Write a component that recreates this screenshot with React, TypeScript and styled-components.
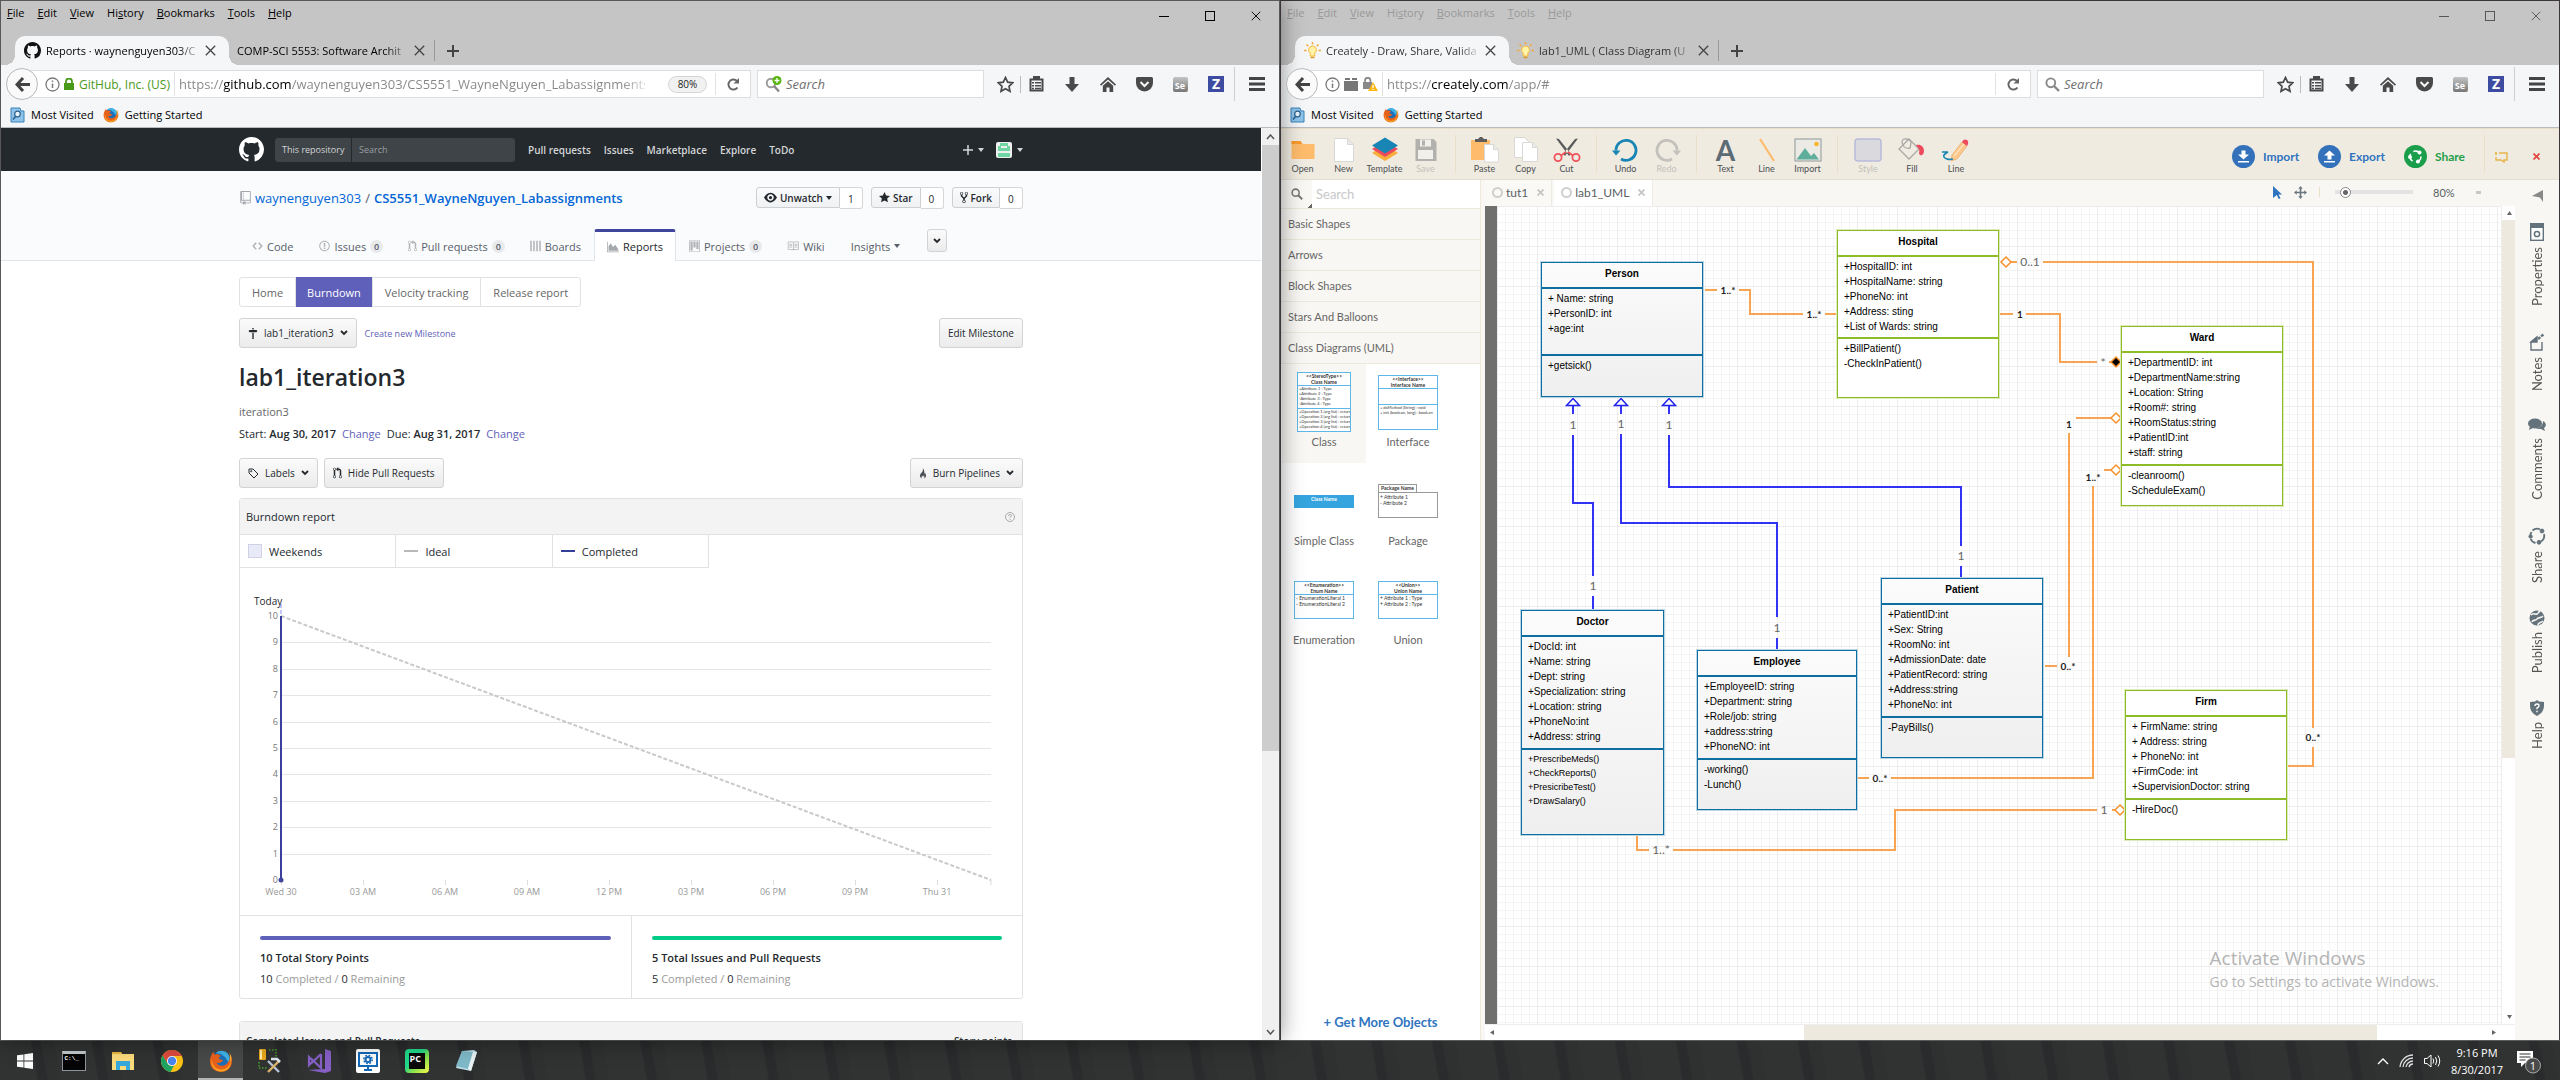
import React from "react";
import styled, { createGlobalStyle, css } from "styled-components";

const UI = `"Open Sans", "Noto Sans", sans-serif`;
const LATO = `Lato, "Open Sans", sans-serif`;
const ARIAL = `"Liberation Sans", Arial, sans-serif`;

const Global = createGlobalStyle`
  *, *::before, *::after { box-sizing: border-box; }
  body { margin: 0; background: #2b2c2c; font-family: ${UI}; font-size: 11px; color: #111; overflow: hidden; }
  button, input, select { font: inherit; color: inherit; margin: 0; padding: 0; border: 0; background: none; outline: 0; }
  h1, h2, h3, p, ul { margin: 0; padding: 0; font-weight: inherit; font-size: inherit; }
  ul { list-style: none; }
  a { color: inherit; text-decoration: none; }
  svg { display: block; flex: none; }
`;

/* ---------- icons ---------- */

const OCT = {
  github: [16, "M8 0C3.58 0 0 3.58 0 8c0 3.54 2.29 6.53 5.47 7.59.4.07.55-.17.55-.38 0-.19-.01-.82-.01-1.49-2.01.37-2.53-.49-2.69-.94-.09-.23-.48-.94-.82-1.13-.28-.15-.68-.52-.01-.53.63-.01 1.08.58 1.23.82.72 1.21 1.87.87 2.33.66.07-.52.28-.87.51-1.07-1.78-.2-3.64-.89-3.64-3.95 0-.87.31-1.59.82-2.15-.08-.2-.36-1.02.08-2.12 0 0 .67-.21 2.2.82.64-.18 1.32-.27 2-.27.68 0 1.36.09 2 .27 1.53-1.04 2.2-.82 2.2-.82.44 1.1.16 1.92.08 2.12.51.56.82 1.27.82 2.15 0 3.07-1.87 3.75-3.65 3.95.29.25.54.73.54 1.48 0 1.07-.01 1.93-.01 2.2 0 .21.15.46.55.38A8.013 8.013 0 0 0 16 8c0-4.42-3.58-8-8-8z"],
  repo: [12, "M4 9H3V8h1v1zm0-3H3v1h1V6zm0-2H3v1h1V4zm0-2H3v1h1V2zm8-1v12c0 .55-.45 1-1 1H6v2l-1.5-1.5L3 16v-2H1c-.55 0-1-.45-1-1V1c0-.55.45-1 1-1h10c.55 0 1 .45 1 1zm-1 10H1v2h2v-1h3v1h5v-2zm0-10H2v9h9V1z"],
  code: [14, "M9.5 3L8 4.5 11.5 8 8 11.5 9.5 13 14 8 9.5 3zm-5 0L0 8l4.5 5L6 11.5 2.5 8 6 4.5 4.5 3z"],
  issue: [14, "M7 2.3c3.14 0 5.7 2.56 5.7 5.7s-2.56 5.7-5.7 5.7A5.71 5.71 0 0 1 1.3 8c0-3.14 2.56-5.7 5.7-5.7zM7 1C3.14 1 0 4.14 0 8s3.14 7 7 7 7-3.14 7-7-3.14-7-7-7zm1 3H6v5h2V4zm0 6H6v2h2v-2z"],
  pull: [12, "M11 11.28V5c-.03-.78-.34-1.47-.94-2.06C9.46 2.35 8.78 2.03 8 2H7V0L4 3l3 3V4h1c.27.02.48.11.69.31.21.2.3.42.31.69v6.28A1.993 1.993 0 0 0 10 15a1.993 1.993 0 0 0 1-3.72zm-1 2.92c-.66 0-1.2-.55-1.2-1.2 0-.65.55-1.2 1.2-1.2.65 0 1.2.55 1.2 1.2 0 .65-.55 1.2-1.2 1.2zM4 3c0-1.11-.89-2-2-2a1.993 1.993 0 0 0-1 3.72v6.56A1.993 1.993 0 0 0 2 15a1.993 1.993 0 0 0 1-3.72V4.72c.59-.34 1-.98 1-1.72zm-.8 10c0 .66-.55 1.2-1.2 1.2-.65 0-1.2-.55-1.2-1.2 0-.65.55-1.2 1.2-1.2.65 0 1.2.55 1.2 1.2zM2 4.2C1.34 4.2.8 3.65.8 3c0-.65.55-1.2 1.2-1.2.65 0 1.2.55 1.2 1.2 0 .65-.55 1.2-1.2 1.2z"],
  boards: [14, "M0 1h2v14H0zM4 1h2v14H4zM8 1h2v14H8zM12 1h2v14h-2z"],
  reports: [16, "M0 1h1v13h15v1H0zM2 13V7l3-4 3 5 3-3 4 6v2z"],
  project: [15, "M10 12h3V2h-3v10zm-4-2h3V2H6v8zm-4 4h3V2H2v12zm-1 1h13V1H1v14zM14 0H1a1 1 0 0 0-1 1v14a1 1 0 0 0 1 1h13a1 1 0 0 0 1-1V1a1 1 0 0 0-1-1z"],
  book: [16, "M3 5h4v1H3V5zm0 3h4V7H3v1zm0 2h4V9H3v1zm11-5h-4v1h4V5zm0 2h-4v1h4V7zm0 2h-4v1h4V9zm2-6v9c0 .55-.45 1-1 1H9.5l-1 1-1-1H2c-.55 0-1-.45-1-1V3c0-.55.45-1 1-1h5.5l1 1 1-1H15c.55 0 1 .45 1 1zm-8 .5L7.5 3H2v9h6V3.5zm7-.5H9.5l-.5.5V12h6V3z"],
  eye: [16, "M8.06 2C3 2 0 8 0 8s3 6 8.06 6C13 14 16 8 16 8s-3-6-7.94-6zM8 12c-2.2 0-4-1.78-4-4 0-2.2 1.8-4 4-4 2.22 0 4 1.8 4 4 0 2.22-1.78 4-4 4zm2-4c0 1.11-.89 2-2 2-1.11 0-2-.89-2-2 0-1.11.89-2 2-2 1.11 0 2 .89 2 2z"],
  star: [14, "M14 6l-4.9-.64L7 1 4.9 5.36 0 6l3.6 3.26L2.67 14 7 11.67 11.33 14l-.93-4.74z"],
  fork: [10, "M8 1a1.993 1.993 0 0 0-1 3.72V6L5 8 3 6V4.72A1.993 1.993 0 0 0 2 1a1.993 1.993 0 0 0-1 3.72V6.5l3 3v1.78A1.993 1.993 0 0 0 5 15a1.993 1.993 0 0 0 1-3.72V9.5l3-3V4.72A1.993 1.993 0 0 0 8 1zM2 4.2C1.34 4.2.8 3.65.8 3c0-.65.55-1.2 1.2-1.2.65 0 1.2.55 1.2 1.2 0 .65-.55 1.2-1.2 1.2zm3 10c-.66 0-1.2-.55-1.2-1.2 0-.65.55-1.2 1.2-1.2.65 0 1.2.55 1.2 1.2 0 .65-.55 1.2-1.2 1.2zm3-10c-.66 0-1.2-.55-1.2-1.2 0-.65.55-1.2 1.2-1.2.65 0 1.2.55 1.2 1.2 0 .65-.55 1.2-1.2 1.2z"],
  milestone: [14, "M8 2H6V0h2v2zm4 4H2L.5 4.500 2 3h10l1.500 1.500zM8 7v9H6V7z"],
  flame: [12, "M5.500 0c1 2.500.2 4.200-.8 5.600C3.500 7.200 1.500 8.500 1.500 11.300c0 1.800.9 3.300 2.400 4.200-.6-2 .3-3.300 1.200-4.300.2 1 .6 1.400 1.200 1.700.3-.7.3-1.600.2-2.400 1.200.9 2.200 2.900 1.500 4.900 1.600-.8 2.500-2.300 2.500-4.100 0-2-.9-3.500-1.800-4.300.1 1-.2 1.600-.7 2C8.400 5.500 7.800 1.800 5.500 0z"],
} as const;

type OctName = keyof typeof OCT;

function Oct({ name, size, color = "currentColor" }: { name: OctName; size: number; color?: string }) {
  const [w, d] = OCT[name];
  return (
    <svg width={Math.round((size * w) / 16)} height={size} viewBox={`0 0 ${w} 16`} fill={color} aria-hidden="true">
      <path d={d} fillRule="evenodd" />
    </svg>
  );
}

function Firefox({ size }: { size: number }) {
  return (
    <svg width={size} height={size} viewBox="0 0 24 24" aria-hidden="true">
      <circle cx="12" cy="11.500" r="9.500" fill="#1b6fb8" />
      <path d="M7 4c3-3 9-3 12 1 2 3 2 6 1 9l-4-6-4-3z" fill="#3fb3e8" />
      <path d="M4.500 2.500C2 6 .6 9 1 13.500 1.700 19.500 6.500 23 12 23c6.500 0 11-5 11-11 0-3.500-1-6-2.500-7.800.6 3 .4 6-1 8.300-1.500 3-4.500 4.500-7.300 4.300-2.200-.2-4-1.400-4.700-3.300 1.500.8 3.200.6 4.500-.3 1-.7 1.700-1 2-1.800-.4-.8-1.700-.7-2.600-1-1-.3-1.800-.8-1.700-1.700.8-.6 2-1 2.200-2.200-1.200-.2-2.300-.6-3-1.400C8.400 5 7 5 6 5.800 5.200 5 4.600 4 4.500 2.500z" fill="#e8611b" />
      <path d="M3 9c-.6 6 3 11.500 9 11.500 5 0 9-3.500 9.700-8.500.9 6-3.700 10.500-9.700 10.500C5.500 22.500 1 17 3 9z" fill="#f9a51f" />
      <path d="M20.500 4.200c2 3 2.500 6 1 9.500.2-3.500-.2-6.500-1-9.500z" fill="#fdd835" />
    </svg>
  );
}

function Chrome() {
  return (
    <svg width="24" height="24" viewBox="0 0 24 24" aria-hidden="true">
      <circle cx="12" cy="12" r="11" fill="#fbc116" />
      <path d="M2.500 6.500A11 11 0 0 1 21.500 6.500L21.800 7H12l-4.300 7.500z" fill="#dd4b3e" />
      <path d="M2.500 6.500l5.200 8A5 5 0 0 0 14 16.600L10.500 22.900A11 11 0 0 1 2.500 6.500z" fill="#1da362" />
      <circle cx="12" cy="12" r="5" fill="#fff" />
      <circle cx="12" cy="12" r="4.200" fill="#4a86f0" />
    </svg>
  );
}

function Bulb() {
  return (
    <svg width="17" height="17" viewBox="0 0 17 17" aria-hidden="true">
      <path d="M8.500 0v2.500M2.500 2.500l1.800 1.800M14.500 2.500l-1.800 1.800M0 8.500h2.500M17 8.500h-2.500" stroke="#f4a93c" strokeWidth="1.500" />
      <path d="M8.500 4a4 4 0 0 1 2.300 7.200V14H6.200v-2.800A4 4 0 0 1 8.500 4z" fill="#fff3a8" stroke="#f6b93d" />
      <path d="M6.500 15.500h4" stroke="#d99a2b" strokeWidth="1.500" />
    </svg>
  );
}

function CloseX({ size = 11, color = "#444", w = 1.3 }: { size?: number; color?: string; w?: number }) {
  return (
    <svg width={size} height={size} viewBox="0 0 11 11" aria-hidden="true">
      <path d="M.8.8l9.400 9.400M10.200.8L.8 10.200" stroke={color} strokeWidth={w} fill="none" />
    </svg>
  );
}

function Magnifier({ color = "#888", size = 15 }: { color?: string; size?: number }) {
  return (
    <svg width={size} height={size} viewBox="0 0 15 15" fill="none" stroke={color} aria-hidden="true">
      <circle cx="5.800" cy="5.800" r="4.400" strokeWidth="1.900" />
      <path d="M9 9l5 5" strokeWidth="2.400" />
    </svg>
  );
}

function Chevron({ color = "#24292e" }: { color?: string }) {
  return (
    <svg width="8" height="6" viewBox="0 0 8 6" aria-hidden="true">
      <path d="M1 1l3 3 3-3" fill="none" stroke={color} strokeWidth="1.800" />
    </svg>
  );
}

function Caret({ color = "currentColor" }: { color?: string }) {
  return (
    <svg width="6" height="4" viewBox="0 0 6 4" aria-hidden="true">
      <path d="M0 0h6L3 4z" fill={color} />
    </svg>
  );
}

function ShareRing({ color, size }: { color: string; size: number }) {
  return (
    <svg width={size} height={size} viewBox="0 0 18 18" fill="none" stroke={color} aria-hidden="true">
      <path d="M4.500 3.500A7 7 0 0 1 12 2.300M16 7a7 7 0 0 1-3 7.500M7.500 16a7 7 0 0 1-4.800-4M2.300 8a7 7 0 0 1 1.300-3" strokeWidth="1.800" />
      <circle cx="14" cy="4" r="1.900" fill={color} />
      <circle cx="11" cy="15.300" r="1.900" fill={color} />
      <circle cx="2.600" cy="9.500" r="1.700" fill={color} />
    </svg>
  );
}

/* ---------- desktop ---------- */

const Desktop = styled.div`
  display: flex;
  flex-direction: column;
  height: 100vh;
  overflow: hidden;
`;

const Windows = styled.div`
  flex: 1;
  min-height: 0;
  display: grid;
  grid-template-columns: 1fr 1fr;
`;

const WindowFrame = styled.section<{ $front?: boolean }>`
  display: flex;
  flex-direction: column;
  min-width: 0;
  min-height: 0;
  border: 1px solid ${(p) => (p.$front ? "#58585a" : "#3b3639")};
  border-bottom: 0;
  background: #fff;
  ${(p) => p.$front && css`position: relative; z-index: 1; box-shadow: 1px 0 0 #3b3639, 0 0 22px rgba(0, 0, 0, 0.45);`}
`;

/* ---------- browser chrome ---------- */

const TitleArea = styled.div<{ $active: boolean }>`
  display: flex;
  flex-direction: column;
  justify-content: space-between;
  height: 64px;
  flex: none;
  background: #c5c5c5;
  color: ${(p) => (p.$active ? "#000" : "#333")};
`;

const MenuRow = styled.div`
  display: flex;
  justify-content: space-between;
  height: 29px;
`;

const Menu = styled.nav<{ $active: boolean }>`
  display: flex;
  gap: 13px;
  padding: 3px 6px;
  line-height: 15px;
  color: ${(p) => (p.$active ? "#000" : "#999")};
`;

const MenuButton = styled.button`
  height: 16px;
  line-height: 15px;
`;

const WinButtons = styled.div<{ $active: boolean }>`
  display: flex;
  color: ${(p) => (p.$active ? "#000" : "#555")};
`;

const WinButton = styled.button`
  width: 46px;
  height: 29px;
  display: grid;
  place-items: center;
`;

const TabStrip = styled.div`
  display: flex;
  height: 29px;
  padding-left: 14px;
`;

const Tab = styled.div<{ $on?: boolean }>`
  position: relative;
  display: flex;
  align-items: center;
  gap: 5px;
  height: 29px;
  padding: 0 7px 0 ${(p) => (p.$on ? 9 : 8)}px;
  ${(p) =>
    p.$on &&
    css`
      padding-right: 11px;
      background: #f5f6f7;
      border-radius: 10px 10px 0 0;
      &::before, &::after {
        content: "";
        position: absolute;
        bottom: 0;
        width: 10px;
        height: 10px;
      }
      &::before { left: -10px; background: radial-gradient(circle at 0 0, transparent 10px, #f5f6f7 10px); }
      &::after { right: -10px; background: radial-gradient(circle at 100% 0, transparent 10px, #f5f6f7 10px); }
    `}
`;

const TabText = styled.button<{ $w: number }>`
  width: ${(p) => p.$w}px;
  overflow: hidden;
  white-space: nowrap;
  text-align: left;
  line-height: 18px;
  -webkit-mask-image: linear-gradient(to right, #000 88%, rgba(0, 0, 0, 0.2));
  mask-image: linear-gradient(to right, #000 88%, rgba(0, 0, 0, 0.2));
`;

const IconButton = styled.button<{ $w?: number }>`
  width: ${(p) => p.$w ?? 16}px;
  flex: none;
  display: grid;
  place-items: center;
`;

const NewTab = styled.button`
  display: grid;
  place-items: center;
  width: 36px;
  margin: 4px 0;
  border-left: 1px solid #999;
`;

const NavRow = styled.div`
  display: flex;
  align-items: center;
  height: 38px;
  flex: none;
  padding-left: 5px;
  background: #f5f6f7;
`;

const Back = styled.button`
  position: relative;
  z-index: 1;
  width: 32px;
  height: 32px;
  flex: none;
  border: 1px solid #b9b9b9;
  border-radius: 50%;
  background: #fafafa;
  display: grid;
  place-items: center;
`;

const UrlBar = styled.div`
  flex: 1;
  min-width: 0;
  height: 28px;
  margin-left: -8px;
  padding-left: 14px;
  border: 1px solid #ddd;
  background: #fff;
  display: flex;
  align-items: center;
  gap: 4px;
`;

const Identity = styled.div`
  display: flex;
  align-items: center;
  gap: 5px;
  padding-right: 4px;
  height: 24px;
  border-right: 1px solid #e2e2e2;
  color: #4a9a1a;
  white-space: nowrap;
  font-size: 12px;
`;

const UrlInput = styled.input<{ $from: number; $to: number }>`
  flex: 1;
  min-width: 0;
  font-size: 13px;
  line-height: 20px;
  color: transparent;
  background-image: linear-gradient(
    to right,
    #858585 ${(p) => p.$from}px,
    #000 ${(p) => p.$from}px,
    #000 ${(p) => p.$to}px,
    #858585 ${(p) => p.$to}px,
    #858585 calc(100% - 24px),
    #ddd
  );
  -webkit-background-clip: text;
  background-clip: text;
`;

const ZoomPill = styled.button`
  width: 39px;
  height: 17px;
  margin: 0 4px 0 19px;
  border: 1px solid #d5d5d5;
  border-radius: 9px;
  background: #f1f1f1;
  font-size: 10px;
  line-height: 14px;
  color: #222;
`;

const Reload = styled.button`
  width: 35px;
  height: 22px;
  border-left: 1px solid #e2e2e2;
  display: grid;
  place-items: center;
`;

const SearchBox = styled.label`
  width: 227px;
  height: 28px;
  margin: 0 0 0 6px;
  padding: 0 7px;
  border: 1px solid #ddd;
  background: #fff;
  display: flex;
  align-items: center;
  gap: 4px;
`;

const SearchInput = styled.input`
  flex: 1;
  min-width: 0;
  font-size: 13px;
  font-style: italic;
  &::placeholder { color: #707070; opacity: 1; }
`;

const Tools = styled.div`
  display: flex;
  align-items: center;
  height: 38px;
  color: #4a4a4a;
`;

const Tool = styled.button<{ $w?: number; $line?: boolean }>`
  width: ${(p) => p.$w ?? 36}px;
  height: ${(p) => (p.$line ? 34 : 18)}px;
  display: grid;
  place-items: center;
  ${(p) => p.$line && css`border-left: 1px solid #d0d0d0;`}
`;

const Thin = styled.span`
  width: 1px;
  height: 17px;
  background: #bbb;
  margin: 0 -3px 0 -6px;
`;

const ZBadge = styled.span`
  width: 16px;
  height: 16px;
  background: #3d4ba0;
  color: #fff;
  font: 700 14px/16px ${UI};
  text-align: center;
`;

const SeBadge = styled.span`
  width: 15px;
  height: 15px;
  border-radius: 2px;
  background: linear-gradient(#c4c4c4, #777);
  color: #fff;
  font: 700 9px/17px ${UI};
`;

const Bookmarks = styled.div`
  display: flex;
  align-items: center;
  gap: 9px;
  height: 25px;
  flex: none;
  padding: 0 9px;
  background: #f5f6f7;
  border-bottom: 1px solid #b9bcbe;
  color: #000;
`;

const Bookmark = styled.a`
  display: flex;
  align-items: center;
  gap: 6px;
  line-height: 16px;
`;

const MENU: [string, string, string][] = [
  ["", "F", "ile"],
  ["", "E", "dit"],
  ["", "V", "iew"],
  ["Hi", "s", "tory"],
  ["", "B", "ookmarks"],
  ["", "T", "ools"],
  ["", "H", "elp"],
];

interface ChromeProps {
  active: boolean;
  tabs: { title: string; icon?: React.ReactNode; w: number }[];
  identity: React.ReactNode;
  url: string;
  domain: [number, number];
  zoom?: string;
  addSearch?: boolean;
}

function BrowserChrome({ active, tabs, identity, url, domain, zoom, addSearch }: ChromeProps) {
  return (
    <>
      <TitleArea $active={active}>
        <MenuRow>
          <Menu $active={active}>
            {MENU.map(([a, u, b]) => (
              <MenuButton key={u + b}>{a}<u>{u}</u>{b}</MenuButton>
            ))}
          </Menu>
          <WinButtons $active={active}>
            <WinButton aria-label="Minimize"><svg width="10" height="10"><path d="M0 5.500h10" stroke="currentColor" /></svg></WinButton>
            <WinButton aria-label="Maximize"><svg width="10" height="10"><rect x=".5" y=".5" width="9" height="9" fill="none" stroke="currentColor" /></svg></WinButton>
            <WinButton aria-label="Close"><CloseX size={10} color="currentColor" w={1} /></WinButton>
          </WinButtons>
        </MenuRow>
        <TabStrip>
          {tabs.map((t, i) => (
            <Tab key={t.title} $on={i === 0}>
              {t.icon}
              <TabText $w={t.w}>{t.title}</TabText>
              <IconButton aria-label="Close tab"><CloseX /></IconButton>
            </Tab>
          ))}
          <NewTab aria-label="New tab">
            <svg width="12" height="12"><path d="M6 0v12M0 6h12" stroke="#444" strokeWidth="2" /></svg>
          </NewTab>
        </TabStrip>
      </TitleArea>
      <NavRow>
        <Back aria-label="Back">
          <svg width="15" height="15" viewBox="0 0 15 15"><path d="M8 1L2 7.500 8 14M2 7.500h13" fill="none" stroke="#444" strokeWidth="3" /></svg>
        </Back>
        <UrlBar>
          <svg width="15" height="15" viewBox="0 0 15 15" aria-hidden="true">
            <circle cx="7.500" cy="7.500" r="6.500" fill="none" stroke="#7a7a7a" strokeWidth="1.300" />
            <path d="M7.500 6.500v4.500M7.500 3.500v1.500" stroke="#7a7a7a" strokeWidth="1.500" />
          </svg>
          <Identity>{identity}</Identity>
          <UrlInput aria-label="Address" defaultValue={url} $from={domain[0]} $to={domain[1]} />
          {zoom && <ZoomPill>{zoom}</ZoomPill>}
          <Reload aria-label="Reload">
            <svg width="13" height="13" viewBox="0 0 13 13"><path d="M10.500 9.500A5 5 0 1 1 10 3" fill="none" stroke="#666" strokeWidth="1.900" /><path d="M12 0v5.500H6.500z" fill="#666" /></svg>
          </Reload>
        </UrlBar>
        <SearchBox>
          {addSearch ? (
            <svg width="17" height="17" viewBox="0 0 17 17" aria-hidden="true">
              <circle cx="6" cy="7" r="4.300" fill="none" stroke="#999" strokeWidth="1.900" />
              <path d="M9 10l5 5.500" stroke="#888" strokeWidth="2.400" />
              <circle cx="12" cy="4.500" r="4.500" fill="#57b50e" />
              <path d="M12 2v5M9.500 4.500h5" stroke="#fff" strokeWidth="1.300" />
            </svg>
          ) : (
            <Magnifier />
          )}
          <SearchInput aria-label="Search" placeholder="Search" />
        </SearchBox>
        <Tools>
          <Tool aria-label="Bookmark this page" $w={42}>
            <svg width="17" height="17" viewBox="0 0 17 17"><path d="M8.500 1.500l2.200 4.700 5 .6-3.700 3.500 1 5-4.500-2.500L4 15.300l1-5L1.300 6.800l5-.6z" fill="none" stroke="#4a4a4a" strokeWidth="1.700" /></svg>
          </Tool>
          <Thin />
          <Tool aria-label="Bookmarks list">
            <svg width="15" height="16" viewBox="0 0 15 16"><path d="M1.500 3.500h12v11h-12z" fill="none" stroke="#4a4a4a" strokeWidth="2" /><path d="M4 0h7v4H4zM3 6h2v1.500H3zM6 6h6v1.500H6zM3 9h2v1.500H3zM6 9h6v1.500H6zM3 11.800h2v1.500H3zM6 11.800h6v1.500H6z" fill="#4a4a4a" /></svg>
          </Tool>
          <Tool aria-label="Downloads">
            <svg width="14" height="15" viewBox="0 0 14 15"><path d="M4.500 0h5v7H14l-7 8-7-8h4.500z" fill="#4a4a4a" /></svg>
          </Tool>
          <Tool aria-label="Home">
            <svg width="16" height="15" viewBox="0 0 16 15"><path d="M8 0l8 7.500-1 1.300L8 2.500 1 8.800 0 7.500zM2.800 8.800L8 4.200l5.200 4.600V15H9.500v-4.500h-3V15H2.800z" fill="#4a4a4a" /></svg>
          </Tool>
          <Tool aria-label="Pocket">
            <svg width="17" height="15" viewBox="0 0 17 15"><path d="M1.500 0h14A1.500 1.500 0 0 1 17 1.500V6A8.500 8.500 0 0 1 0 6V1.500A1.500 1.500 0 0 1 1.500 0z" fill="#4a4a4a" /><path d="M4.500 5l4 4 4-4" fill="none" stroke="#f5f6f7" strokeWidth="2" /></svg>
          </Tool>
          <Tool aria-label="Selenium IDE"><SeBadge>Se</SeBadge></Tool>
          <Tool aria-label="Zotero"><ZBadge>Z</ZBadge></Tool>
          <Tool $w={45} $line aria-label="Open menu">
            <svg width="16" height="14"><path d="M0 1.500h16M0 7h16M0 12.500h16" stroke="#444" strokeWidth="3" /></svg>
          </Tool>
        </Tools>
      </NavRow>
      <Bookmarks>
        <Bookmark href="#">
          <svg width="15" height="16" viewBox="0 0 15 16" aria-hidden="true">
            <path d="M1 1h9l1 3h3v11H1z" fill="#8fc3ea" stroke="#3b82b8" />
            <circle cx="7.500" cy="7" r="2.800" fill="#e8f4fc" stroke="#2b608c" strokeWidth="1.200" />
            <path d="M5.500 9.500L3 12.500" stroke="#2b608c" strokeWidth="1.600" />
          </svg>
          Most Visited
        </Bookmark>
        <Bookmark href="#"><Firefox size={16} />Getting Started</Bookmark>
      </Bookmarks>
    </>
  );
}

/* ---------- GitHub ---------- */

const PageRow = styled.div`
  flex: 1;
  min-height: 0;
  display: flex;
`;

const Page = styled.main`
  flex: 1;
  min-width: 0;
  overflow: hidden;
  color: #24292e;
`;

const Wrap = styled.div`
  width: 784px;
  max-width: 100%;
  margin: 0 auto;
`;

const GhHeader = styled.header`
  background: #24292e;
  color: #d3d5d7;
  font-size: 10px;
  font-weight: 600;
`;

const GhHeaderRow = styled(Wrap)`
  display: flex;
  align-items: center;
  height: 43px;
`;

const GhSearch = styled.label`
  display: flex;
  width: 240px;
  height: 24px;
  margin: 0 13px 0 11px;
  border-radius: 3px;
  background: #3f4448;
  font-size: 9px;
  font-weight: 400;
  line-height: 24px;
  overflow: hidden;
`;

const GhScope = styled.span`
  width: 77px;
  padding-left: 7px;
  border-right: 1px solid #24292e;
`;

const GhSearchInput = styled.input`
  flex: 1;
  min-width: 0;
  padding-left: 7px;
  &::placeholder { color: #9a9da0; opacity: 1; }
`;

const GhNav = styled.nav`
  display: flex;
  gap: 13px;
  flex: 1;
  line-height: 16px;
`;

const GhUser = styled.div`
  display: flex;
  align-items: center;
  gap: 12px;
`;

const GhUserButton = styled.button`
  display: flex;
  align-items: center;
  gap: 5px;
`;

const RepoHead = styled.div`
  background: #fafbfc;
  border-bottom: 1px solid #e1e4e8;
  padding-top: 16px;
`;

const RepoTitleRow = styled(Wrap)`
  display: flex;
  align-items: center;
  justify-content: space-between;
  height: 22px;
`;

const RepoTitle = styled.h1`
  display: flex;
  align-items: center;
  gap: 4px;
  padding-left: 1px;
  font-size: 13px;
  line-height: 20px;
  color: #586069;
  a { color: #0366d6; }
  b { font-weight: 600; }
`;

const Social = styled.ul`
  display: flex;
  gap: 8px;
`;

const SocialItem = styled.li`
  display: flex;
  font-size: 10px;
  line-height: 20px;
`;

const SocialButton = styled.button`
  display: flex;
  align-items: center;
  gap: 3px;
  height: 21px;
  padding: 0 7px;
  border: 1px solid #cdcfd1;
  border-radius: 3px 0 0 3px;
  background: linear-gradient(#fafbfc, #eff1f3);
  font-weight: 600;
`;

const SocialCount = styled.a`
  height: 22px;
  min-width: 23px;
  padding: 1px 8px;
  border: 1px solid #d5d7d9;
  border-left: 0;
  border-radius: 0 3px 3px 0;
  background: #fff;
`;

const RepoTabs = styled(Wrap)`
  display: flex;
  align-items: flex-start;
  height: 31px;
  margin-top: 20px;
`;

const RepoTab = styled.a<{ $on?: boolean }>`
  display: flex;
  align-items: center;
  gap: 4px;
  height: ${(p) => (p.$on ? 32 : 31)}px;
  padding: 0 12px;
  border: 1px solid transparent;
  border-top-width: 3px;
  border-bottom: 0;
  color: #586069;
  ${(p) =>
    p.$on &&
    css`
      background: #fff;
      color: #24292e;
      border-color: #3f469b #e1e4e8 transparent;
      border-radius: 3px 3px 0 0;
    `}
`;

const Badge = styled.span`
  min-width: 13px;
  height: 13px;
  margin-right: -1px;
  border-radius: 7px;
  background: #e8e9eb;
  font-size: 9px;
  font-weight: 600;
  line-height: 13px;
  text-align: center;
`;

const MoreSlot = styled.div`
  padding-left: 14px;
`;

const Btn = styled.button<{ $h?: number }>`
  display: flex;
  align-items: center;
  gap: 6px;
  height: ${(p) => p.$h ?? 30}px;
  padding: 0 8px;
  border: 1px solid #d3d3d3;
  border-radius: 3px;
  background: linear-gradient(#fbfbfb, #ebebeb);
  font-size: 10px;
  line-height: 16px;
  color: #24292e;
`;

const MoreBtn = styled(Btn)`
  padding: 0 5px;
`;

const SubNav = styled.nav`
  display: flex;
  width: max-content;
  height: 30px;
  margin-top: 16px;
  border: 1px solid #e2e2e2;
  border-radius: 3px;
  color: #666;
`;

const SubNavItem = styled.a<{ $on?: boolean }>`
  display: flex;
  align-items: center;
  padding: 0 ${(p) => (p.$on ? 11 : 12)}px;
  ${(p) => (p.$on ? css`background: #5f60ba; color: #fff; margin: -1px 0;` : css`& + & { border-left: 1px solid #e2e2e2; }`)}
`;

const BtnRow = styled.div<{ $top: number }>`
  display: flex;
  align-items: center;
  gap: 6px;
  margin-top: ${(p) => p.$top}px;
`;

const Push = styled.span`
  flex: 1;
`;

const Purple = styled.a<{ $small?: boolean }>`
  color: #5f5fb8;
  ${(p) => p.$small && css`font-size: 9px; padding-left: 2px;`}
`;

const Heading = styled.h2`
  margin-top: 12px;
  font-size: 23px;
  font-weight: 600;
  line-height: 34px;
`;

const Desc = styled.p`
  margin-top: 10px;
  line-height: 16px;
  color: #666;
`;

const Dates = styled.p`
  display: flex;
  gap: 6px;
  margin-top: 6px;
  line-height: 16px;
  b { font-weight: 600; }
`;

const Panel = styled.section<{ $top: number }>`
  margin-top: ${(p) => p.$top}px;
  border: 1px solid #e2e2e2;
  border-radius: 3px;
  background: #fff;
`;

const PanelHead = styled.div<{ $table?: boolean }>`
  display: flex;
  align-items: center;
  justify-content: space-between;
  height: ${(p) => (p.$table ? 38 : 36)}px;
  padding: 0 6px;
  background: #f3f3f3;
  border-bottom: 1px solid #e2e2e2;
  ${(p) => p.$table && css`padding-right: 10px; font-size: 10px; font-weight: 600;`}
`;

const Legend = styled.ul`
  display: grid;
  grid-template-columns: repeat(3, 1fr);
  width: 60%;
  height: 33px;
`;

const LegendItem = styled.li`
  display: flex;
  align-items: center;
  gap: 7px;
  padding-left: 8px;
  border-right: 1px solid #e2e2e2;
  border-bottom: 1px solid #e2e2e2;
`;

const Swatch = styled.span<{ $c: string; $box?: boolean }>`
  width: 14px;
  height: ${(p) => (p.$box ? 14 : 2)}px;
  background: ${(p) => p.$c};
  ${(p) => p.$box && css`border: 1px solid #d0d1e6;`}
`;

const ChartBox = styled.div`
  height: 347px;
`;

const Stats = styled.div`
  display: grid;
  grid-template-columns: 1fr 1fr;
  border-top: 1px solid #e2e2e2;
`;

const Stat = styled.div`
  height: 82px;
  padding: 20px 20px 0;
  & + & { border-left: 1px solid #e2e2e2; }
`;

const StatBar = styled.div<{ $c: string }>`
  height: 4px;
  border-radius: 2px;
  background: ${(p) => p.$c};
`;

const StatTitle = styled.h3`
  margin-top: 10px;
  font-weight: 600;
  line-height: 16px;
`;

const StatText = styled.p`
  margin-top: 5px;
  line-height: 16px;
  color: #999;
  b { font-weight: 400; color: #24292e; }
`;

const VScroll = styled.div`
  display: flex;
  flex-direction: column;
  justify-content: space-between;
  width: 18px;
  border-left: 1px solid #fff;
  background: #f0f0f0;
`;

const ScrollCap = styled.button`
  width: 17px;
  height: 17px;
  display: grid;
  place-items: center;
`;

const ScrollTrack = styled.div`
  flex: 1;
`;

const ScrollThumb = styled.div`
  height: 69%;
  background: #cdcdcd;
`;

const GRID_X = ["Wed 30", "03 AM", "06 AM", "09 AM", "12 PM", "03 PM", "06 PM", "09 PM", "Thu 31"];

function Burndown() {
  const left = 41;
  const right = 751;
  const top = 48;
  const step = 26.4;
  const bottom = top + step * 10;
  return (
    <svg width="782" height="347" viewBox="0 0 782 347" fontFamily="Open Sans, sans-serif" role="img" aria-label="Burndown chart">
      {Array.from({ length: 9 }, (_, i) => (
        <path key={i} d={`M${left} ${Math.round(top + step * (i + 1)) + 0.5}H${right}`} stroke="#e5e5e5" />
      ))}
      {GRID_X.map((t, i) => (
        <path key={t} d={`M${Math.round(left + 82 * i) + 0.5} ${bottom}v5`} stroke="#ddd" />
      ))}
      <path d={`M${right} ${bottom}v5`} stroke="#ddd" />
      <path d={`M${left} ${top}L${right} ${bottom}`} stroke="#c9c9c9" strokeWidth="2" strokeDasharray="4 2" />
      <path d={`M${left} 36V${top}`} stroke="#8d8df0" strokeDasharray="4 2" />
      <path d={`M${left} ${top}V${bottom}`} stroke="#3a3f9e" strokeWidth="2" />
      <circle cx={left} cy={bottom} r="2.500" fill="#3f469b" />
      <text x="14" y="37" fontSize="10" fill="#24292e">Today</text>
      {Array.from({ length: 11 }, (_, i) => (
        <text key={i} x="38" y={Math.round(top + step * i) + 3} fontSize="9" fill="#777" textAnchor="end">{10 - i}</text>
      ))}
      {GRID_X.map((t, i) => (
        <text key={t} x={left + 82 * i} y="327" fontSize="9" fill="#999" textAnchor="middle">{t}</text>
      ))}
    </svg>
  );
}

function GitHubPage() {
  return (
    <PageRow>
      <Page>
        <GhHeader>
          <GhHeaderRow>
            <Oct name="github" size={25} color="#fff" />
            <GhSearch>
              <GhScope>This repository</GhScope>
              <GhSearchInput placeholder="Search" />
            </GhSearch>
            <GhNav>
              <a href="#">Pull requests</a>
              <a href="#">Issues</a>
              <a href="#">Marketplace</a>
              <a href="#">Explore</a>
              <a href="#">ToDo</a>
            </GhNav>
            <GhUser>
              <GhUserButton aria-label="Create new">
                <svg width="10" height="10"><path d="M5 0v10M0 5h10" stroke="#d3d5d7" strokeWidth="1.500" /></svg>
                <Caret />
              </GhUserButton>
              <GhUserButton aria-label="Account">
                <svg width="16" height="16" viewBox="0 0 16 16">
                  <rect width="16" height="16" rx="2" fill="#f0f0f0" />
                  <path d="M4 1h8v3h2v5H2V4h2zM2 11h12v4H2z" fill="#6fd5a5" />
                  <path d="M5 4h6v2H5z" fill="#f0f0f0" />
                </svg>
                <Caret />
              </GhUserButton>
            </GhUser>
          </GhHeaderRow>
        </GhHeader>

        <RepoHead>
          <RepoTitleRow>
            <RepoTitle>
              <Oct name="repo" size={14} color="#a3a7ab" />
              <a href="#">waynenguyen303</a>/<a href="#"><b>CS5551_WayneNguyen_Labassignments</b></a>
            </RepoTitle>
            <Social>
              <SocialItem>
                <SocialButton><Oct name="eye" size={13} />Unwatch <Caret /></SocialButton>
                <SocialCount href="#">1</SocialCount>
              </SocialItem>
              <SocialItem>
                <SocialButton><Oct name="star" size={13} />Star</SocialButton>
                <SocialCount href="#">0</SocialCount>
              </SocialItem>
              <SocialItem>
                <SocialButton><Oct name="fork" size={13} />Fork</SocialButton>
                <SocialCount href="#">0</SocialCount>
              </SocialItem>
            </Social>
          </RepoTitleRow>
          <RepoTabs>
            <RepoTab href="#"><Oct name="code" size={12} color="#b0b3b6" />Code</RepoTab>
            <RepoTab href="#"><Oct name="issue" size={12} color="#b0b3b6" />Issues <Badge>0</Badge></RepoTab>
            <RepoTab href="#"><Oct name="pull" size={12} color="#b0b3b6" />Pull requests <Badge>0</Badge></RepoTab>
            <RepoTab href="#"><Oct name="boards" size={12} color="#b0b3b6" />Boards</RepoTab>
            <RepoTab href="#" $on><Oct name="reports" size={12} color="#a6a9ac" />Reports</RepoTab>
            <RepoTab href="#"><Oct name="project" size={12} color="#b0b3b6" />Projects <Badge>0</Badge></RepoTab>
            <RepoTab href="#"><Oct name="book" size={12} color="#b0b3b6" />Wiki</RepoTab>
            <RepoTab href="#">Insights <Caret /></RepoTab>
            <MoreSlot>
              <MoreBtn $h={23} aria-label="More"><Chevron /></MoreBtn>
            </MoreSlot>
          </RepoTabs>
        </RepoHead>

        <Wrap>
          <SubNav>
            <SubNavItem href="#">Home</SubNavItem>
            <SubNavItem href="#" $on>Burndown</SubNavItem>
            <SubNavItem href="#">Velocity tracking</SubNavItem>
            <SubNavItem href="#">Release report</SubNavItem>
          </SubNav>
          <BtnRow $top={11}>
            <Btn><Oct name="milestone" size={11} />lab1_iteration3 <Chevron /></Btn>
            <Purple href="#" $small>Create new Milestone</Purple>
            <Push />
            <Btn>Edit Milestone</Btn>
          </BtnRow>
          <Heading>lab1_iteration3</Heading>
          <Desc>iteration3</Desc>
          <Dates>
            <span>Start: <b>Aug 30, 2017</b></span>
            <Purple href="#">Change</Purple>
            <span>Due: <b>Aug 31, 2017</b></span>
            <Purple href="#">Change</Purple>
          </Dates>
          <BtnRow $top={16}>
            <Btn>
              <svg width="11" height="11" viewBox="0 0 11 11" fill="none" stroke="#24292e"><path d="M1 1h4l5 5-4 4-5-5z" /><circle cx="3.200" cy="3.200" r=".6" /></svg>
              Labels <Chevron />
            </Btn>
            <Btn><Oct name="pull" size={12} />Hide Pull Requests</Btn>
            <Push />
            <Btn><Oct name="flame" size={11} color="#4b5157" />Burn Pipelines <Chevron /></Btn>
          </BtnRow>

          <Panel $top={10}>
            <PanelHead>
              <h3>Burndown report</h3>
              <IconButton aria-label="Help" $w={12}>
                <svg width="10" height="10" viewBox="0 0 10 10" fill="none" stroke="#aaa">
                  <circle cx="5" cy="5" r="4.500" />
                  <path d="M3.500 4q0-1.500 1.500-1.500t1.500 1.200q0 .8-1.500 1.500v.6M5 7v1" />
                </svg>
              </IconButton>
            </PanelHead>
            <Legend>
              <LegendItem><Swatch $box $c="#e9eaf7" />Weekends</LegendItem>
              <LegendItem><Swatch $c="#b9b9b9" />Ideal</LegendItem>
              <LegendItem><Swatch $c="#34409a" />Completed</LegendItem>
            </Legend>
            <ChartBox><Burndown /></ChartBox>
            <Stats>
              <Stat>
                <StatBar $c="#5f60ba" />
                <StatTitle>10 Total Story Points</StatTitle>
                <StatText><b>10</b> Completed / <b>0</b> Remaining</StatText>
              </Stat>
              <Stat>
                <StatBar $c="#00cc88" />
                <StatTitle>5 Total Issues and Pull Requests</StatTitle>
                <StatText><b>5</b> Completed / <b>0</b> Remaining</StatText>
              </Stat>
            </Stats>
          </Panel>

          <Panel $top={22}>
            <PanelHead $table>
              <span>Completed Issues and Pull Requests</span>
              <span>Story points</span>
            </PanelHead>
          </Panel>
        </Wrap>
      </Page>
      <VScroll>
        <ScrollCap aria-label="Scroll up"><svg width="9" height="6"><path d="M1 5l3.500-4L8 5" fill="none" stroke="#555" strokeWidth="1.500" /></svg></ScrollCap>
        <ScrollTrack><ScrollThumb /></ScrollTrack>
        <ScrollCap aria-label="Scroll down"><svg width="9" height="6"><path d="M1 1l3.500 4L8 1" fill="none" stroke="#555" strokeWidth="1.500" /></svg></ScrollCap>
      </VScroll>
    </PageRow>
  );
}

/* ---------- Creately ---------- */

const CreatelyApp = styled.div`
  flex: 1;
  min-height: 0;
  display: flex;
  flex-direction: column;
  background: #f8f7f3;
  font-family: ${LATO};
  color: #5a5f63;
`;

const ToolBar = styled.div`
  display: flex;
  align-items: flex-start;
  height: 52px;
  flex: none;
  padding-left: 1px;
  background: #efebe1;
  border-top: 1px solid #e8dfc8;
  border-bottom: 1px solid #e3dfd3;
`;

const ToolCell = styled.button<{ $w?: number; $dim?: boolean }>`
  display: flex;
  flex-direction: column;
  align-items: center;
  width: ${(p) => p.$w ?? 41}px;
  padding-top: 8px;
  font-size: 9px;
  line-height: 12px;
  color: ${(p) => (p.$dim ? "#c3c1ba" : "#4c4f52")};
`;

const Glyph = styled.span`
  width: 28px;
  height: 26px;
  font: 700 28px/26px ${LATO};
  color: #5d6b75;
`;

const Divider = styled.span<{ $h: number }>`
  width: 1px;
  height: ${(p) => p.$h}px;
  background: #e8dfc8;
`;

const GroupDivider = styled(Divider)`
  margin: 6px 8px 0 9px;
`;

const ActionDivider = styled(Divider)`
  margin-top: 6px;
`;

const Action = styled.button<{ $c: string }>`
  display: flex;
  align-items: center;
  gap: 8px;
  height: 50px;
  padding-top: 5px;
  margin-right: 19px;
  font-size: 12px;
  font-weight: 700;
  color: ${(p) => p.$c};
`;

const Body = styled.div`
  flex: 1;
  min-height: 0;
  display: flex;
`;

const Sidebar = styled.aside`
  width: 200px;
  flex: none;
  margin-right: 4px;
  display: flex;
  flex-direction: column;
  border-right: 1px solid #f0e8d8;
  background: #fff;
`;

const SideSearch = styled.label`
  display: flex;
  align-items: center;
  height: 29px;
  border-bottom: 1px solid #ece8dc;
`;

const SideSearchIcon = styled.span`
  width: 31px;
  height: 28px;
  display: grid;
  place-items: center;
  background: linear-gradient(135deg, #f8f7f3 92%, #666 92%);
`;

const SideInput = styled.input`
  flex: 1;
  min-width: 0;
  padding-left: 4px;
  font-size: 13px;
  &::placeholder { color: #c8c8c8; opacity: 1; }
`;

const Category = styled.button`
  height: 31px;
  padding: 0 7px 2px;
  text-align: left;
  background: #f8f7f3;
  border-bottom: 1px solid #ece8dc;
  color: #666;
  font-size: 11px;
`;

const Shapes = styled.div`
  flex: 1;
  display: grid;
  grid-template-columns: 84px 84px;
  grid-auto-rows: 99px;
  padding-left: 1px;
`;

const ShapeCell = styled.button<{ $on?: boolean }>`
  display: grid;
  grid-template-rows: 68px 12px;
  align-content: start;
  padding-top: 4px;
  justify-items: center;
  align-items: center;
  background: ${(p) => (p.$on ? "#f8f7f3" : "#fff")};
  color: #666;
  font-size: 11px;
  line-height: 12px;
`;

const MoreObjects = styled.a`
  height: 32px;
  text-align: center;
  font-size: 13px;
  font-weight: 700;
  line-height: 28px;
  color: #2f74c0;
`;

const Stage = styled.div`
  flex: 1;
  min-width: 0;
  display: flex;
  flex-direction: column;
`;

const DocTabs = styled.div`
  display: flex;
  height: 26px;
  flex: none;
`;

const DocTab = styled.div<{ $on?: boolean }>`
  display: flex;
  align-items: center;
  gap: 3px;
  padding: 0 7px 2px;
  margin-right: 2px;
  border-right: 1px solid #eeebe3;
  background: ${(p) => (p.$on ? "#fff" : "#faf9f6")};
  font-size: 12px;
  button:last-child { margin-left: 5px; }
`;

const Ring = styled.span`
  width: 11px;
  height: 11px;
  border: 2px solid #cfcfcf;
  border-radius: 50%;
`;

const StageTools = styled.div`
  margin-left: auto;
  display: flex;
  align-items: center;
  gap: 12px;
  padding: 0 32px 2px 0;
  font-size: 11px;
`;

const ZoomRange = styled.input`
  appearance: none;
  width: 78px;
  height: 4px;
  margin: 0 8px 0 3px;
  background: #e3e3e3;
  &::-webkit-slider-thumb {
    appearance: none;
    width: 11px;
    height: 11px;
    border: 1px solid #888;
    border-radius: 50%;
    background: radial-gradient(circle, #666 2px, #fff 3px);
  }
`;

const ZoomSelect = styled.select`
  appearance: none;
  width: 50px;
  background: linear-gradient(#c8c8c8, #c8c8c8) no-repeat right 2px center / 5px 3px;
`;

const CanvasRow = styled.div`
  flex: 1;
  min-height: 0;
  display: flex;
`;

const Ruler = styled.div`
  width: 12px;
  flex: none;
  background: #70706e;
`;

const Canvas = styled.div`
  position: relative;
  flex: 1;
  min-width: 0;
  overflow: hidden;
  background-color: #fff;
  background-image: linear-gradient(to right, #ececec 1px, transparent 1px), linear-gradient(#ececec 1px, transparent 1px),
    linear-gradient(to right, #f4f4f4 1px, transparent 1px), linear-gradient(#f4f4f4 1px, transparent 1px);
  background-size: 40px 40px, 40px 40px, 8px 8px, 8px 8px;
`;

const Wires = styled.svg`
  position: absolute;
  left: 0;
  top: 0;
`;

const CanvasV = styled.div`
  width: 14px;
  flex: none;
  display: flex;
  flex-direction: column;
  border-left: 1px solid #eee;
  background: #fff;
`;

const CanvasH = styled.div`
  display: flex;
  height: 16px;
  flex: none;
  background: #fff;
  border-top: 1px solid #eee;
`;

const Cap = styled.button`
  width: 14px;
  height: 14px;
  flex: none;
  display: grid;
  place-items: center;
`;

const Fill = styled.span<{ $grow: number; $on?: boolean }>`
  flex: ${(p) => p.$grow} 1 0;
  background: ${(p) => (p.$on ? "#eee9df" : "#fff")};
`;

const SidePanel = styled.nav`
  width: 44px;
  flex: none;
  display: flex;
  flex-direction: column;
  align-items: center;
  gap: 27px;
  padding-top: 10px;
`;

const CollapseButton = styled(IconButton)`
  height: 12px;
  margin-bottom: -6px;
`;

const PanelButton = styled.button`
  display: flex;
  flex-direction: column;
  align-items: center;
  gap: 6px;
  color: #555;
  span {
    writing-mode: vertical-rl;
    transform: rotate(180deg);
    font-size: 13px;
    line-height: 16px;
  }
`;

const NodeBox = styled.article<{ $x: number; $y: number; $w: number; $h: number; $c: string; $glow: string; $fill: string }>`
  position: absolute;
  left: ${(p) => p.$x}px;
  top: ${(p) => p.$y}px;
  width: ${(p) => p.$w}px;
  height: ${(p) => p.$h}px;
  border: 1px solid ${(p) => p.$c};
  outline: 1px solid ${(p) => p.$glow};
  background: ${(p) => p.$fill};
  font-family: ${ARIAL};
  font-size: 10px;
  line-height: 15px;
  color: #000;
  white-space: pre;
  > * + * { border-top: 2px solid ${(p) => p.$c}; }
`;

const NodeTitle = styled.h3`
  height: 24px;
  text-align: center;
  font-weight: 700;
  line-height: 22px;
`;

const NodePart = styled.ul<{ $h?: number; $small?: boolean }>`
  ${(p) => p.$h && css`height: ${p.$h}px;`}
  padding: 2px 6px 0;
  ${(p) => p.$small && css`font-size: 9px; line-height: 14px;`}
`;

const Watermark = styled.div`
  position: absolute;
  right: 62px;
  bottom: 32px;
  font-family: ${UI};
  color: #b4b4b4;
  h2 { font-size: 19px; line-height: 28px; }
  p { font-size: 14px; line-height: 20px; }
`;

const ORIGIN = { x: 1497, y: 206 };
const THEMES = {
  blue: { c: "#0e6da1", glow: "#b9d6e5", fill: "linear-gradient(#fbfbfb, #efefef)" },
  green: { c: "#8ebc26", glow: "#dcebbd", fill: "#fff" },
};

interface UmlNode {
  name: string;
  kind: keyof typeof THEMES;
  box: [number, number, number, number];
  split: number;
  attrs: string[];
  methods: string[];
  small?: boolean;
}

const NODES: UmlNode[] = [
  { name: "Person", kind: "blue", box: [1541, 262, 162, 135], split: 67, attrs: ["+ Name: string", "+PersonID: int", "+age:int"], methods: ["+getsick()"] },
  { name: "Hospital", kind: "green", box: [1837, 230, 162, 168], split: 82, attrs: ["+HospitalID: int", "+HospitalName: string", "+PhoneNo: int", "+Address: sting", "+List of Wards: string"], methods: ["+BillPatient()", "-CheckInPatient()"] },
  { name: "Ward", kind: "green", box: [2121, 326, 162, 180], split: 113, attrs: ["+DepartmentID: int", "+DepartmentName:string", "+Location: String", "+Room#: string", "+RoomStatus:string", "+PatientID:int", "+staff: string"], methods: ["-cleanroom()", "-ScheduleExam()"] },
  { name: "Doctor", kind: "blue", box: [1521, 610, 143, 225], split: 113, small: true, attrs: ["+DocId: int", "+Name: string", "+Dept: string", "+Specialization: string", "+Location: string", "+PhoneNo:int", "+Address: string"], methods: ["+PrescribeMeds()", "+CheckReports()", "+PresicribeTest()", "+DrawSalary()"] },
  { name: "Employee", kind: "blue", box: [1697, 650, 160, 160], split: 83, attrs: ["+EmployeeID: string", "+Department: string", "+Role/job: string", "+address:string", "+PhoneNO: int"], methods: ["-working()", "-Lunch()"] },
  { name: "Patient", kind: "blue", box: [1881, 578, 162, 180], split: 113, attrs: ["+PatientID:int", "+Sex: String", "+RoomNo: int", "+AdmissionDate: date", "+PatientRecord: string", "+Address:string", "+PhoneNo: int"], methods: ["-PayBills()"] },
  { name: "Firm", kind: "green", box: [2125, 690, 162, 150], split: 83, attrs: ["+ FirmName: string", "+ Address: string", "+ PhoneNo: int", "+FirmCode: int", "+SupervisionDoctor: string"], methods: ["-HireDoc()"] },
];

const BLUE_WIRES =
  "M1573 405V414M1573 435V503H1593V576M1593 596V610" +
  "M1621 405V414M1621 434V523H1777V617M1777 638V650" +
  "M1669 405V414M1669 435V487H1961V546M1961 566V578";

const ORANGE_WIRES =
  "M1705 290H1717M1739 290H1750V314H1803M1825 314H1837" +
  "M2011 262H2017M2043 262H2313V728M2313 747V766H2288" +
  "M2000 314H2013M2026 314H2060V362H2097M2109 362H2112" +
  "M2111 418H2076M2069 433V657M2057 666H2045" +
  "M2111 470H2104M2093 486V778H1891M1869 778H1858" +
  "M1637 835V850H1649M1673 850H1895V810H2097M2112 810H2115";

const WIRE_LABELS: [number, number, string, boolean][] = [
  [1573, 425, "1", false], [1621, 424, "1", false], [1669, 425, "1", false],
  [1593, 586, "1", false], [1777, 628, "1", false], [1961, 556, "1", false],
  [1728, 290, "1..*", true], [1814, 314, "1..*", true], [2030, 262, "0..1", false],
  [2020, 314, "1", true], [2103, 363, "*", false], [2069, 424, "1", true],
  [2093, 477, "1..*", true], [2068, 666, "0..*", true], [2313, 737, "0..*", true],
  [1880, 778, "0..*", true], [1661, 850, "1..*", false], [2104, 810, "1", false],
];

const DIAMONDS: [number, number, boolean][] = [
  [2006, 262, false], [2116, 362, true], [2116, 418, false], [2116, 470, false], [2120, 810, false],
];

function Diagram() {
  return (
    <Canvas>
      <Wires width="1005" height="818" viewBox={`${ORIGIN.x} ${ORIGIN.y} 1005 818`} fontFamily="Lato, sans-serif" aria-hidden="true">
        <path d={BLUE_WIRES} fill="none" stroke="#3232f5" strokeWidth="2" />
        {[1573, 1621, 1669].map((x) => (
          <path key={x} d={`M${x} 398.500l6.500 7h-13z`} fill="#fff" stroke="#2222ee" strokeWidth="1.500" />
        ))}
        <path d={ORANGE_WIRES} fill="none" stroke="#f8a452" strokeWidth="2" />
        {DIAMONDS.map(([x, y, solid]) => (
          <path key={`${x}-${y}`} d={`M${x} ${y - 5}l5 5-5 5-5-5z`} fill={solid ? "#000" : "#fff"} stroke="#f5922f" strokeWidth="1.500" />
        ))}
        {WIRE_LABELS.map(([x, y, t, bold]) => (
          <text key={`${x}-${y}`} x={x} y={y + 4} textAnchor="middle" fontSize={bold ? 10 : 12} fontWeight={bold ? 700 : 400} fill={bold ? "#222" : "#666"}>{t}</text>
        ))}
      </Wires>
      {NODES.map((n) => {
        const t = THEMES[n.kind];
        const [x, y, w, h] = n.box;
        return (
          <NodeBox key={n.name} $x={x - ORIGIN.x} $y={y - ORIGIN.y} $w={w} $h={h} $c={t.c} $glow={t.glow} $fill={t.fill}>
            <NodeTitle>{n.name}</NodeTitle>
            <NodePart $h={n.split}>{n.attrs.map((a) => <li key={a}>{a}</li>)}</NodePart>
            <NodePart $small={n.small}>{n.methods.map((m) => <li key={m}>{m}</li>)}</NodePart>
          </NodeBox>
        );
      })}
      <Watermark>
        <h2>Activate Windows</h2>
        <p>Go to Settings to activate Windows.</p>
      </Watermark>
    </Canvas>
  );
}

const Mini = styled.span<{ $w: number; $h: number; $c: string; $solid?: boolean }>`
  display: flex;
  flex-direction: column;
  width: ${(p) => p.$w}px;
  height: ${(p) => p.$h}px;
  border: 1px solid ${(p) => p.$c};
  background: ${(p) => (p.$solid ? p.$c : "#fff")};
  color: ${(p) => (p.$solid ? "#fff" : "#333")};
  font-size: 5px;
  line-height: 6px;
  text-align: left;
  white-space: nowrap;
  overflow: hidden;
`;

const MiniHead = styled.span`
  text-align: center;
  font-weight: 700;
`;

const MiniPart = styled.span<{ $c: string; $h?: number; $tight?: boolean }>`
  ${(p) => p.$h && css`height: ${p.$h}px;`}
  padding: 0 1px;
  border-top: 1px solid ${(p) => p.$c};
  ${(p) => p.$tight && css`font-size: 4px; line-height: 5px;`}
`;

const PackageShape = styled.span`
  display: flex;
  flex-direction: column;
  align-items: flex-start;
`;

const PackageTab = styled.span`
  height: 8px;
  padding: 0 2px;
  border: 1px solid #999;
  border-bottom: 0;
  font-size: 5px;
  font-weight: 700;
  line-height: 7px;
  color: #333;
`;

const SKY = "#5db8e8";

function Minis() {
  return (
    <Shapes>
      <ShapeCell $on>
        <Mini $w={54} $h={60} $c={SKY}>
          <MiniHead>&lt;&lt;StereoType&gt;&gt;<br />Class Name</MiniHead>
          <MiniPart $c={SKY} $h={23} $tight>+Attribute 1 : Type<br />+Attribute 2 : Type<br />-Attribute 3 : Type<br />-Attribute 4 : Type</MiniPart>
          <MiniPart $c={SKY} $tight>+Operation 1 (arg list) : return<br />+Operation 2 (arg list) : return<br />+Operation 3 (arg list) : return<br />+Operation 4 (arg list) : return</MiniPart>
        </Mini>
        Class
      </ShapeCell>
      <ShapeCell>
        <Mini $w={60} $h={55} $c={SKY}>
          <MiniHead>&lt;&lt;Interface&gt;&gt;<br />Interface Name</MiniHead>
          <MiniPart $c={SKY} $h={16} />
          <MiniPart $c={SKY} $tight>+ doMethod (String) : void<br />+ init (boolean, long) : boolean</MiniPart>
        </Mini>
        Interface
      </ShapeCell>
      <ShapeCell>
        <Mini $w={60} $h={13} $c="#35a4df" $solid><MiniHead>Class Name</MiniHead></Mini>
        Simple Class
      </ShapeCell>
      <ShapeCell>
        <PackageShape>
          <PackageTab>Package Name</PackageTab>
          <Mini $w={60} $h={26} $c="#999"><MiniPart $c="#fff">+ Attribute 1<br />- Attribute 2</MiniPart></Mini>
        </PackageShape>
        Package
      </ShapeCell>
      <ShapeCell>
        <Mini $w={60} $h={38} $c={SKY}>
          <MiniHead>&lt;&lt;Enumeration&gt;&gt;<br />Enum Name</MiniHead>
          <MiniPart $c={SKY}>- EnumerationLiteral 1<br />- EnumerationLiteral 2</MiniPart>
        </Mini>
        Enumeration
      </ShapeCell>
      <ShapeCell>
        <Mini $w={60} $h={38} $c={SKY}>
          <MiniHead>&lt;&lt;Union&gt;&gt;<br />Union Name</MiniHead>
          <MiniPart $c={SKY}>+ Attribute 1 : Type<br />+ Attribute 2 : Type</MiniPart>
        </Mini>
        Union
      </ShapeCell>
    </Shapes>
  );
}

const T = ({ children }: { children: React.ReactNode }) => (
  <svg width="28" height="26" viewBox="0 0 28 26" aria-hidden="true">{children}</svg>
);

interface ToolSpec { label: string; dim?: boolean; w?: number; art: React.ReactNode }

const GROUPS: ToolSpec[][] = [
  [
    { label: "Open", art: <T><path d="M2.500 4h9l2 3h12v15h-23z" fill="#fdbb6b" /><path d="M2.500 4h9l2 3h-11z" fill="#f79a2d" /></T> },
    { label: "New", art: <T><path d="M4.500 1.500h13l6 6v17h-19z" fill="#fff" stroke="#d8d8d6" /><path d="M17.500 1.500v6h6z" fill="#eceae6" stroke="#d8d8d6" /></T> },
    { label: "Template", art: <T><path d="M1 16l13-8 13 8-13 8z" fill="#f9ae3b" /><path d="M1 12l13-8 13 8-13 8z" fill="#ee4a5c" /><path d="M1 8.500L14 .5l13 8-13 8z" fill="#1885b5" /></T> },
    { label: "Save", dim: true, art: <T><path d="M3.500 2h18l3 3v19h-21z" fill="#b3b1ad" /><path d="M8 2.500h11v7H8zM6 13h15v9H6z" fill="#f2f0eb" /><path d="M10 3.500h3v5h-3z" fill="#b3b1ad" /></T> },
  ],
  [
    { label: "Paste", art: <T><path d="M0 3h19v20H0z" fill="#fdbb6b" /><path d="M4 2h3l2-2h2l2 2h3v3H4z" fill="#5d5d5b" /><path d="M13.500 7.500h9l5 5V25h-14z" fill="#fff" stroke="#d8d8d6" /><path d="M22.500 7.500v5h5" fill="#eceae6" stroke="#d8d8d6" /></T> },
    { label: "Copy", art: <T><path d="M2.500.5h10l4 4v16h-14z" fill="#fff" stroke="#d8d8d6" /><path d="M10.500 5.500h10l5 5v14h-15z" fill="#fff" stroke="#d8d8d6" /><path d="M20.500 5.500v5h5" fill="#eceae6" stroke="#d8d8d6" /></T> },
    { label: "Cut", art: <T><path d="M3 1.500l3 .5 12 15-2 2zM25 1.500l-3 .5-12 15 2 2z" fill="#5b5b5b" /><circle cx="5" cy="20.500" r="3.600" fill="none" stroke="#f1525c" strokeWidth="1.800" /><circle cx="23" cy="20.500" r="3.600" fill="none" stroke="#f1525c" strokeWidth="1.800" /><path d="M8 18.500l5-3.500M20 18.500l-5-3.500" stroke="#f1525c" strokeWidth="1.800" /></T> },
  ],
  [
    { label: "Undo", art: <T><path d="M9 22a10 10 0 1 0-5-8.500" fill="none" stroke="#1885b5" strokeWidth="2.800" /><path d="M0 13.500h8.500l-4.500 5z" fill="#1885b5" /></T> },
    { label: "Redo", dim: true, art: <T><path d="M19 22a10 10 0 1 1 5-8.500" fill="none" stroke="#c3c1bb" strokeWidth="2.800" /><path d="M28 13.500h-8.500l4.500 5z" fill="#c3c1bb" /></T> },
  ],
  [
    { label: "Text", art: <Glyph>A</Glyph> },
    { label: "Line", art: <T><path d="M7 2l14 22" stroke="#fdbb6b" strokeWidth="2.200" /></T> },
    { label: "Import", art: <T><rect x="1" y="2" width="26" height="22" fill="#eceae4" stroke="#9fa5a6" strokeWidth="1.200" /><path d="M2.500 22.500L11 11l6 8 3-3 5 6.500z" fill="#5fae9b" /><circle cx="22.500" cy="7" r="2.300" fill="#f8b62b" /></T> },
  ],
  [
    { label: "Style", dim: true, w: 44, art: <T><rect x="1" y="2" width="26" height="22" rx="3" fill="#dadade" stroke="#b9bbdb" strokeWidth="1.500" /></T> },
    { label: "Fill", w: 44, art: <T><path d="M11 2l10 10-10 10L1 12z" fill="none" stroke="#a9a9a6" strokeWidth="1.300" /><path d="M12 11C4 13 1 1 8 2s5 4 4 9z" fill="none" stroke="#a9a9a6" strokeWidth="1.300" /><path d="M18 8c5-1 8 2 8 6 0 3-2 5-4 4-2-2 0-3-1-6z" fill="#ee4a5c" /></T> },
    { label: "Line", w: 44, art: <T><path d="M10 18L20 5l5 4-10 13-6 2z" fill="#fdc98d" stroke="#e8a765" strokeWidth=".7" /><path d="M12 19L22 7" stroke="#fff0dc" /><path d="M20 5c2-5 9-2 5 4z" fill="#ee4a5c" /><path d="M0 15h6c-2 1-5 3-4 5s5 3 9 2" fill="none" stroke="#1885b5" strokeWidth="1.600" /></T> },
  ],
];

function Creately() {
  return (
    <CreatelyApp>
      <ToolBar>
        {GROUPS.map((g, i) => (
          <React.Fragment key={i}>
            {i > 0 && <GroupDivider $h={38} />}
            {g.map((t) => (
              <ToolCell key={t.label} $dim={t.dim} $w={t.w}>{t.art}{t.label}</ToolCell>
            ))}
          </React.Fragment>
        ))}
        <Push />
        <Action $c="#2f74c0">
          <svg width="23" height="23" viewBox="0 0 23 23"><circle cx="11.500" cy="11.500" r="11.500" fill="#3372ba" /><path d="M9.500 5.500h4v4H17l-5.500 5L6 9.500h3.500zM6 16h11v1.500H6z" fill="#fff" /></svg>
          Import
        </Action>
        <Action $c="#2f74c0">
          <svg width="23" height="23" viewBox="0 0 23 23"><circle cx="11.500" cy="11.500" r="11.500" fill="#3372ba" /><path d="M9.500 14.500h4v-4H17l-5.500-5-5.500 5h3.500zM6 16h11v1.500H6z" fill="#fff" /></svg>
          Export
        </Action>
        <Action $c="#1f9e49">
          <svg width="23" height="23" viewBox="0 0 23 23">
            <circle cx="11.500" cy="11.500" r="11.500" fill="#1a9e4b" />
            <circle cx="11.500" cy="11.500" r="5.500" fill="none" stroke="#fff" strokeWidth="1.600" strokeDasharray="8 3.500" />
            <circle cx="15.500" cy="7.500" r="2" fill="#fff" /><circle cx="6" cy="12" r="2" fill="#fff" /><circle cx="14" cy="16.500" r="2" fill="#fff" />
          </svg>
          Share
        </Action>
        <ActionDivider $h={38} />
        <Action $c="#e8b54a" aria-label="Feedback">
          <svg width="40" height="12" viewBox="6 0 40 12"><path d="M20 2h8v7h-3v2l-3-2h-5V6M18 2h-2M17 1v3" fill="none" stroke="#e8b54a" strokeWidth="1.400" /></svg>
          <CloseX size={7} color="#e2443b" w={2.6} />
        </Action>
      </ToolBar>
      <Body>
        <Sidebar>
          <SideSearch>
            <SideSearchIcon><Magnifier color="#777" size={12} /></SideSearchIcon>
            <SideInput aria-label="Search shapes" placeholder="Search" />
          </SideSearch>
          {["Basic Shapes", "Arrows", "Block Shapes", "Stars And Balloons", "Class Diagrams (UML)"].map((c) => (
            <Category key={c}>{c}</Category>
          ))}
          <Minis />
          <MoreObjects href="#">+ Get More Objects</MoreObjects>
        </Sidebar>
        <Stage>
          <DocTabs>
            <DocTab><Ring /><button>tut1</button><IconButton $w={8} aria-label="Close tut1"><CloseX size={7} color="#c4c4c4" w={2.6} /></IconButton></DocTab>
            <DocTab $on><Ring /><button>lab1_UML</button><IconButton $w={8} aria-label="Close lab1_UML"><CloseX size={7} color="#c4c4c4" w={2.6} /></IconButton></DocTab>
            <StageTools>
              <IconButton $w={9} aria-label="Select"><svg width="9" height="13" viewBox="0 0 9 13"><path d="M0 0l9 8.500H5.500l2 3.800-1.800.7-1.900-3.900L0 12z" fill="#2f74c0" /></svg></IconButton>
              <IconButton $w={13} aria-label="Pan"><svg width="13" height="13" viewBox="0 0 13 13"><path d="M6.500 0l2.200 2.700H7.300v3h3V4.300L13 6.500l-2.700 2.200V7.300h-3v3h1.400L6.500 13l-2.200-2.700h1.400v-3h-3v1.400L0 6.500l2.700-2.200v1.400h3v-3H4.300z" fill="#6a7780" /></svg></IconButton>
              <Divider $h={10} />
              <ZoomRange type="range" aria-label="Zoom" min={0} max={100} defaultValue={8} />
              <ZoomSelect aria-label="Zoom level" defaultValue="80%"><option>80%</option></ZoomSelect>
            </StageTools>
          </DocTabs>
          <CanvasRow>
            <Ruler />
            <Diagram />
            <CanvasV>
              <Cap aria-label="Up"><svg width="5" height="4"><path d="M0 4h5L2.500 0z" fill="#666" /></svg></Cap>
              <Fill $grow={537} $on />
              <Fill $grow={252} />
              <Cap aria-label="Down"><svg width="5" height="4"><path d="M0 0h5L2.500 4z" fill="#666" /></svg></Cap>
            </CanvasV>
          </CanvasRow>
          <CanvasH>
            <Cap aria-label="Left"><svg width="4" height="5"><path d="M4 0v5L0 2.500z" fill="#666" /></svg></Cap>
            <Fill $grow={305} />
            <Fill $grow={573} $on />
            <Fill $grow={110} />
            <Cap aria-label="Right"><svg width="4" height="5"><path d="M0 0v5l4-2.500z" fill="#666" /></svg></Cap>
            <Cap as="span" />
          </CanvasH>
        </Stage>
        <SidePanel>
          <CollapseButton aria-label="Collapse"><svg width="11" height="12"><path d="M11 0v12L8 7.500 0 6z" fill="#888" /></svg></CollapseButton>
          <PanelButton>
            <svg width="14" height="18" viewBox="0 0 14 18"><rect x=".7" y=".7" width="12.600" height="16.600" fill="#fff" stroke="#64727c" strokeWidth="1.400" /><path d="M0 0h14v5H0z" fill="#64727c" /><circle cx="7" cy="11" r="2.600" fill="none" stroke="#64727c" strokeWidth="1.500" /></svg>
            <span>Properties</span>
          </PanelButton>
          <PanelButton>
            <svg width="16" height="18" viewBox="0 0 16 18" fill="none" stroke="#64727c" strokeWidth="1.400"><path d="M8 4L2 9v8h11V9" /><path d="M2 9h6V4z" fill="#64727c" /><path d="M9 6l6-5" strokeDasharray="3 1" strokeWidth="2.400" /></svg>
            <span>Notes</span>
          </PanelButton>
          <PanelButton>
            <svg width="18" height="14" viewBox="0 0 18 14" fill="#64727c"><ellipse cx="7" cy="5.500" rx="7" ry="5" /><path d="M2 8l-1 4 4-2zM15 3c3 1.500 4 5 1 7l1 3-4-2c-2 .3-4-.2-5-1 4 0 7-2.500 7-7z" /></svg>
            <span>Comments</span>
          </PanelButton>
          <PanelButton><ShareRing color="#64727c" size={18} /><span>Share</span></PanelButton>
          <PanelButton>
            <svg width="16" height="16" viewBox="0 0 16 16"><circle cx="8" cy="8" r="7.500" fill="#64727c" /><path d="M2 5c3-3 4 0 6-1s1-2 3-3M3 12c1-3 4-1 5-3s3 0 6-3M9 15c0-3 3-2 5-4" fill="none" stroke="#f8f7f3" strokeWidth="1.600" /></svg>
            <span>Publish</span>
          </PanelButton>
          <PanelButton>
            <svg width="14" height="16" viewBox="0 0 14 16"><path d="M7 0l2 1.500 5 .5c.5 7-1 11-7 14C1 13 -.5 9 0 2l5-.5z" fill="#64727c" /><path d="M5 6q0-2 2-2t2 1.700Q9 7 7 8v1.300M7 10.800v1.500" fill="none" stroke="#fff" strokeWidth="1.400" /></svg>
            <span>Help</span>
          </PanelButton>
        </SidePanel>
      </Body>
    </CreatelyApp>
  );
}

/* ---------- taskbar ---------- */

const Taskbar = styled.footer`
  display: flex;
  align-items: stretch;
  justify-content: space-between;
  height: 40px;
  flex: none;
  border-top: 1px solid #5b5b5b;
  background: repeating-linear-gradient(80deg, #313333 0 36px, #2a2b2c 38px 46px, #2f3131 48px 60px);
  color: #fff;
`;

const TaskIcons = styled.div`
  display: flex;
`;

const TaskIcon = styled.button<{ $on?: boolean }>`
  width: 45px;
  margin: 0 2px;
  display: grid;
  place-items: center;
  ${(p) => p.$on && css`background: #484a4a; border-bottom: 2px solid #b5b5b5; padding-top: 2px;`}
`;

const Tray = styled.div`
  display: flex;
  align-items: center;
  gap: 10px;
  padding-right: 18px;
`;

const Clock = styled.button`
  width: 58px;
  margin-left: -3px;
  font-size: 11px;
  line-height: 17px;
  text-align: center;
`;

const PyTile = styled.span`
  width: 24px;
  height: 24px;
  display: grid;
  place-items: center;
  border-radius: 4px;
  background: linear-gradient(135deg, #21d789 40%, #7fe04e 60%, #fcf84a);
  span {
    width: 16px;
    height: 16px;
    background: #0a0a0a;
    font-size: 9px;
    font-weight: 700;
    line-height: 11px;
    text-align: left;
    padding-left: 1px;
  }
`;

const Dos = styled.span`
  width: 24px;
  height: 20px;
  border: 1px solid #8d9499;
  border-top: 3px solid #c5cacc;
  background: #050505;
  font: 700 6px/10px "Liberation Mono", monospace;
  text-align: left;
  padding-left: 2px;
`;

function Bar() {
  return (
    <Taskbar>
      <TaskIcons>
        <TaskIcon aria-label="Start"><svg width="16" height="16" viewBox="0 0 16 16"><path d="M0 2.300L6.500 1.400v6.200H0zM7.300 1.300L16 0v7.600H7.300zM0 8.400h6.500v6.200L0 13.700zM7.300 8.400H16V16l-8.700-1.200z" fill="#fff" /></svg></TaskIcon>
        <TaskIcon aria-label="Command Prompt"><Dos>C:\_</Dos></TaskIcon>
        <TaskIcon aria-label="File Explorer"><svg width="24" height="20" viewBox="0 0 24 20"><path d="M1 1h9l1 2h12v16H1z" fill="#fbdc7c" /><path d="M1 1h9l1 2H1z" fill="#e9b93e" /><path d="M5 10h14v9h-4v-4H9v4H5z" fill="#38a9dc" /></svg></TaskIcon>
        <TaskIcon aria-label="Chrome"><Chrome /></TaskIcon>
        <TaskIcon aria-label="Firefox" $on><Firefox size={24} /></TaskIcon>
        <TaskIcon aria-label="Database tools"><svg width="24" height="24" viewBox="0 0 24 24"><rect x="1" y="0" width="7" height="11" rx="1" fill="#e9a91c" /><path d="M2 1h2v9H2z" fill="#fff1b0" /><path d="M11 1h7v8M1 13v6h8" fill="none" stroke="#47a02c" strokeWidth="1.500" strokeDasharray="1.500 1.500" /><path d="M10 12l11 11" stroke="#b7c4d6" strokeWidth="2.400" /><path d="M21 12L10 23" stroke="#d9b26a" strokeWidth="2.400" /><path d="M13 10h6l3 3" fill="none" stroke="#dfe6ee" strokeWidth="2.600" /></svg></TaskIcon>
        <TaskIcon aria-label="Visual Studio"><svg width="24" height="24" viewBox="0 0 24 24"><path d="M18 0l6 2v20l-6 2L1 21l17-1z" fill="#865fc5" /><path d="M2 8l4 4-4 4zM14 5v14L4 9.500M14 5L4 14.500" fill="none" stroke="#865fc5" strokeWidth="2.200" /></svg></TaskIcon>
        <TaskIcon aria-label="Configuration"><svg width="24" height="24" viewBox="0 0 24 24"><rect width="24" height="24" rx="2" fill="#fff" /><rect x="3" y="4" width="18" height="13" fill="none" stroke="#1468b8" strokeWidth="2" /><path d="M8 21h8M12 17v4" stroke="#1468b8" strokeWidth="2" /><circle cx="12" cy="10.500" r="2.500" fill="none" stroke="#1468b8" strokeWidth="2" /><circle cx="12" cy="10.500" r="4.200" fill="none" stroke="#1468b8" strokeWidth="1.400" strokeDasharray="1.800 1.500" /></svg></TaskIcon>
        <TaskIcon aria-label="PyCharm"><PyTile><span>PC</span></PyTile></TaskIcon>
        <TaskIcon aria-label="Notepad"><svg width="24" height="24" viewBox="0 0 24 24"><path d="M8 2l12-1 3 2-6 19-15-3z" fill="#bcdfe8" /><path d="M8 2l11 1-5 17-12-3z" fill="#7fb9c8" /><path d="M19 3l4 0-6 19-3-2z" fill="#e8f2f4" /></svg></TaskIcon>
      </TaskIcons>
      <Tray>
        <svg width="12" height="8" aria-hidden="true"><path d="M1 7l5-5 5 5" fill="none" stroke="#fff" strokeWidth="1.300" /></svg>
        <svg width="15" height="15" viewBox="0 0 15 15" fill="none" stroke="#ddd" aria-hidden="true"><path d="M1 14A13 13 0 0 1 14 2M4 14a10 10 0 0 1 10-9M7 14a7 7 0 0 1 7-6M10 14a4 4 0 0 1 4-3" strokeWidth="1.300" /></svg>
        <svg width="17" height="14" viewBox="0 0 17 14" fill="none" stroke="#fff" aria-hidden="true"><path d="M.5 4.500H3L7 1v12L3 9.500H.5zM9 4.500q1.500 2.500 0 5M11.500 3q2.500 4 0 8M14 1.500q3.500 5.500 0 11" /></svg>
        <Clock>9:16 PM<br />8/30/2017</Clock>
        <svg width="26" height="26" viewBox="0 0 26 26" aria-label="1 notification" role="img">
          <path d="M1 3h16v12H9l-4 4v-4H1z" fill="#fff" />
          <path d="M3.500 6h11M3.500 9h11M3.500 12h6" stroke="#333" strokeWidth="1.200" />
          <circle cx="17" cy="17.500" r="7.500" fill="#4a4a4a" stroke="#aaa" />
          <text x="17" y="21.500" fontSize="11" fill="#fff" textAnchor="middle" fontFamily="Open Sans, sans-serif">1</text>
        </svg>
      </Tray>
    </Taskbar>
  );
}

export default function App() {
  return (
    <Desktop>
      <Global />
      <Windows>
        <WindowFrame $front>
          <BrowserChrome
            active
            tabs={[
              { title: "Reports · waynenguyen303/C", icon: <Oct name="github" size={17} color="#111" />, w: 151 },
              { title: "COMP-SCI 5553: Software Archit", w: 169 },
            ]}
            identity={
              <>
                <svg width="10" height="12" viewBox="0 0 10 12" aria-hidden="true"><path d="M0 5h10v7H0z" fill="#4a9a1a" /><path d="M2 6V3.500a3 3 0 0 1 6 0V6" fill="none" stroke="#4a9a1a" strokeWidth="1.800" /></svg>
                GitHub, Inc. (US)
              </>
            }
            url="https://github.com/waynenguyen303/CS5551_WayneNguyen_Labassignments"
            domain={[45, 112]}
            zoom="80%"
            addSearch
          />
          <GitHubPage />
        </WindowFrame>
        <WindowFrame>
          <BrowserChrome
            active={false}
            tabs={[
              { title: "Creately - Draw, Share, Valida", icon: <Bulb />, w: 151 },
              { title: "lab1_UML ( Class Diagram (U", icon: <Bulb />, w: 151 },
            ]}
            identity={
              <>
                <svg width="14" height="13" viewBox="0 0 14 13" aria-hidden="true"><path d="M0 3h14v10H0zM1 0h5v2H1zM8 0h5v2H8z" fill="#777" /></svg>
                <svg width="15" height="14" viewBox="0 0 15 14" aria-hidden="true"><path d="M0 5h9v7H0z" fill="#888" /><path d="M2 6V3.500a2.700 2.700 0 0 1 5.400 0V6" fill="none" stroke="#888" strokeWidth="1.700" /><path d="M10 5l5 9H5z" fill="#fcb817" /><path d="M10 8v3M10 12v1" stroke="#fff" strokeWidth="1.200" /></svg>
              </>
            }
            url="https://creately.com/app/#"
            domain={[45, 122]}
          />
          <Creately />
        </WindowFrame>
      </Windows>
      <Bar />
    </Desktop>
  );
}
